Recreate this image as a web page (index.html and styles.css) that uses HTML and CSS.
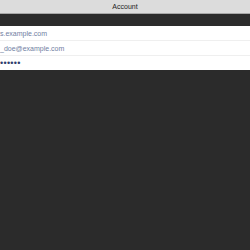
FILE: index.html
```html
<!DOCTYPE html>
<html lang="en">
    <head>
        <meta charset="UTF-8">
        <title>Account</title>
        <link rel="stylesheet" href="styles.css">
    </head>
    <body>
        <div class="title-bar">Account</div>
        <div class="spacer"></div>
        <div class="fields">
            <div class="field">s.example.com</div>
            <div class="field">_doe@example.com</div>
            <div class="field password">••••••</div>
        </div>
    </body>
</html>
```
FILE: styles.css
```css
* {
    margin: 0;
    padding: 0;
    box-sizing: border-box;
}

body {
    background-color: #2b2b2b;
    font-family: 'Liberation Sans', Arial, sans-serif;
    width: 250px;
    height: 250px;
    overflow: hidden;
}

.title-bar {
    height: 14px;
    background-color: #dcdcdc;
    border-bottom: 1px solid #a8a8a8;
    color: #222;
    font-size: 7px;
    line-height: 13px;
    text-align: center;
}

.spacer {
    height: 12px;
}

.fields {
    background-color: #fff;
}

.field {
    height: 15px;
    line-height: 15px;
    font-size: 7px;
    color: #6f7ea2;
    border-bottom: 1px solid #efefef;
    white-space: nowrap;
}

.field:last-child {
    border-bottom: none;
    height: 14px;
}

.password {
    color: #2e3d6c;
    font-size: 9px;
    letter-spacing: 0.3px;
}
```
